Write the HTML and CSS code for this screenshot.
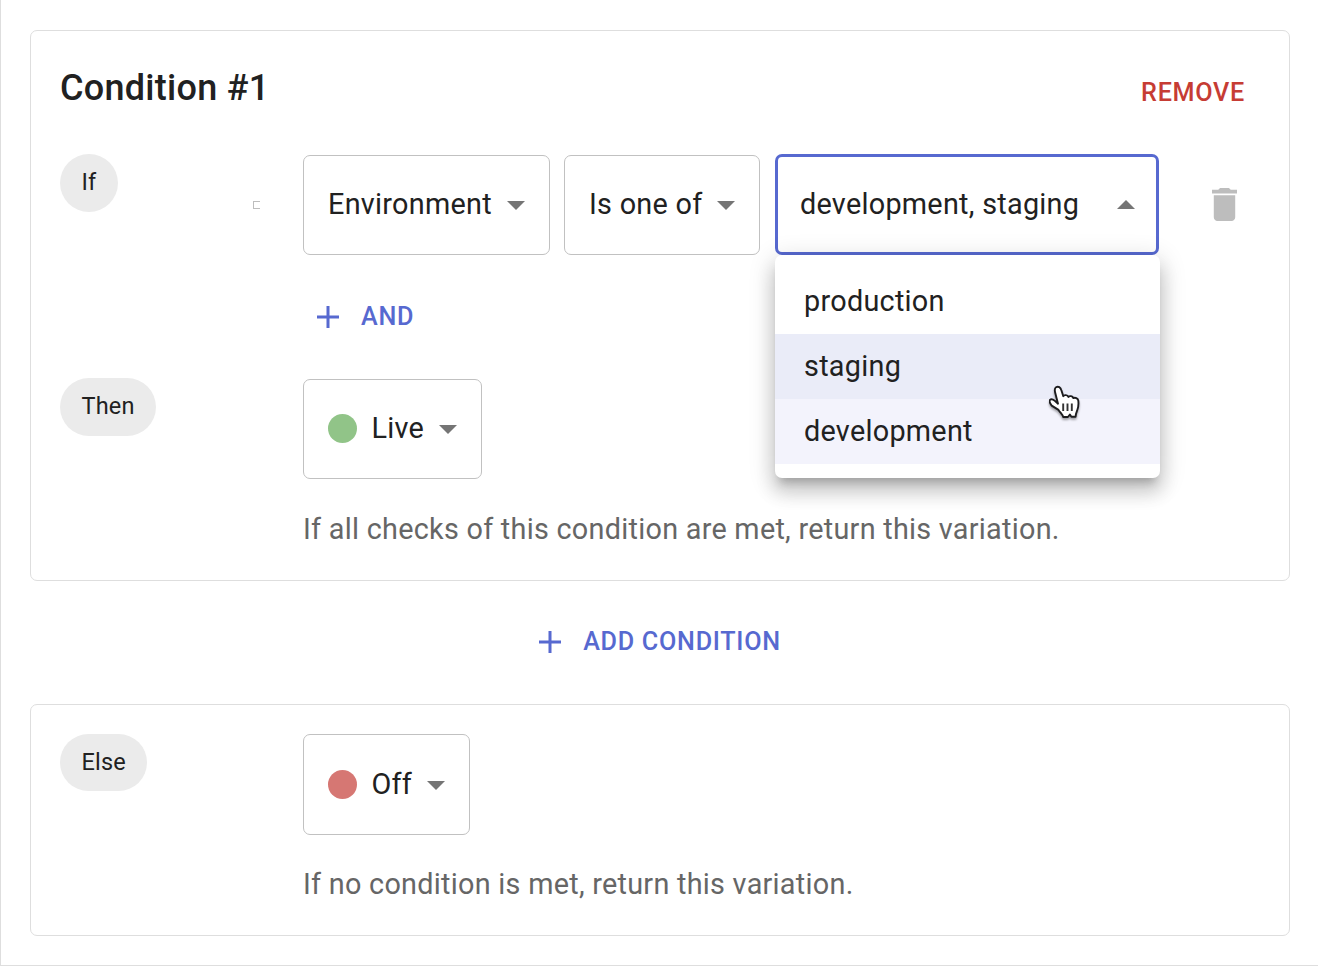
FILE: index.html
```html
<!DOCTYPE html>
<html lang="en">
<head>
<meta charset="utf-8">
<title>Conditions</title>
<link rel="stylesheet" href="styles.css">
</head>
<body>
<main class="panel">
  <section class="card">
    <header class="card-header">
      <h2 class="title">Condition #1</h2>
      <button class="btn btn-remove">REMOVE</button>
    </header>
    <div class="row row-if">
      <div class="label"><span class="chip">If</span><span class="bracket"></span></div>
      <div class="checks">
        <div class="select select-env"><span>Environment</span><svg class="arrow" viewBox="0 0 18 9"><path d="M0 0h18L9 9z"/></svg></div>
        <div class="select select-op"><span>Is one of</span><svg class="arrow" viewBox="0 0 18 9"><path d="M0 0h18L9 9z"/></svg></div>
        <div class="select select-open">
          <span>development, staging</span><svg class="arrow" viewBox="0 0 18 9"><path d="M0 9h18L9 0z"/></svg>
          <ul class="menu">
            <li class="item">production</li>
            <li class="item item-hover">staging</li>
            <li class="item item-selected">development</li>
          </ul>
          <svg class="pointer" viewBox="0 0 34 36">
            <path d="M7 3.2C9.4 1.8 11.6 3.4 12.3 6l2 6.2c.8-1.6 4.200-1.500 5.100.7 1.100-1.300 4.200-1 5 1.200 1.600-1 4.600-.1 4.900 2.600.4 3.500.1 6.500-1 9.300-.9 2.200-1.500 3.400-1.700 6.700h-4.200l-1.500-2.200-2 2.500h-4.700c-.6-2.700-2.900-4.300-4.700-7.100L2.700 21.600C.6 18.900-.1 17.200 1 15.900c1.500-1.400 4.300-.1 6.500 2.400L9 19.700 6.200 8.700C5.500 5.900 5.700 4 7 3.200z" fill="#fff" stroke="#1c1c1e" stroke-width="1.900" stroke-linejoin="round"/>
            <path d="M14.200 19.500v7.500M18.500 19.500v7.500M22.800 19.500v7.500" stroke="#333" stroke-width="1.900"/>
          </svg>
        </div>
        <svg class="trash" viewBox="5 3 14 18" preserveAspectRatio="none"><path d="M6 19c0 1.100.9 2 2 2h8c1.100 0 2-.9 2-2V7H6v12zM19 4h-3.500l-1-1h-5l-1 1H5v2h14V4z"/></svg>
      </div>
    </div>
    <button class="btn btn-and"><svg class="plus" viewBox="0 0 22 22"><path d="M11 0v22M0 11h22"/></svg>AND</button>
    <div class="row row-then">
      <div class="label"><span class="chip">Then</span></div>
      <div class="result">
        <div class="select select-live"><i class="dot dot-live"></i><span>Live</span><svg class="arrow" viewBox="0 0 18 9"><path d="M0 0h18L9 9z"/></svg></div>
        <p class="hint">If all checks of this condition are met, return this variation.</p>
      </div>
    </div>
  </section>
  <div class="add"><button class="btn"><svg class="plus" viewBox="0 0 22 22"><path d="M11 0v22M0 11h22"/></svg>ADD CONDITION</button></div>
  <section class="card card-else">
    <div class="row">
      <div class="label"><span class="chip">Else</span></div>
      <div class="result">
        <div class="select select-off"><i class="dot dot-off"></i><span>Off</span><svg class="arrow" viewBox="0 0 18 9"><path d="M0 0h18L9 9z"/></svg></div>
        <p class="hint">If no condition is met, return this variation.</p>
      </div>
    </div>
  </section>
</main>
</body>
</html>
```
FILE: styles.css
```css
* { box-sizing: border-box; }
body {
  margin: 0;
  background: #fff;
  color: #212121;
  font-family: Roboto, "Liberation Sans", sans-serif;
  font-size: 28.8px;
  letter-spacing: 0.27px;
}
.panel {
  height: 966px;
  padding: 30px 28px 0 29px;
  border-left: 1px solid #dedede;
  border-bottom: 1px solid #dedede;
}
.card {
  height: 551px;
  padding: 29px;
  border: 1px solid #dedede;
  border-radius: 7px;
}
.card-else { height: 232px; }
.card-header {
  display: flex;
  justify-content: space-between;
  height: 94px;
  padding-right: 15px;
}
.title {
  margin: 0;
  font-size: 36px;
  line-height: 57px;
  font-weight: 500;
  letter-spacing: 0.27px;
}
.btn {
  display: flex;
  align-items: center;
  padding: 0;
  border: 0;
  background: none;
  color: #5769d0;
  font: 500 25.2px/44px Roboto, "Liberation Sans", sans-serif;
  letter-spacing: 0.7px;
}
.btn-remove { height: 64px; padding-top: 1px; color: #c63c34; }
.btn-and { height: 44px; margin: 40px 0 0 257px; }
.plus {
  width: 22px;
  height: 22px;
  margin-right: 22px;
  fill: none;
  stroke: #5769d0;
  stroke-width: 3;
}
.row { display: flex; }
.row-if { height: 101px; }
.row-then { margin-top: 39px; }
.label {
  display: flex;
  width: 243px;
  flex: none;
  justify-content: space-between;
}
.chip {
  height: 58px;
  padding: 0 21.5px;
  border-radius: 29px;
  background: #ebebeb;
  font-size: 23.5px;
  line-height: 57px;
  letter-spacing: 0.2px;
}
.card-else .chip { height: 57px; }
.bracket {
  width: 7px;
  height: 8px;
  margin: 47px 43px 0 0;
  border: 1px solid #bdbdbd;
  border-right: 0;
}
.checks { display: flex; padding-top: 1px; }
.select {
  position: relative;
  display: flex;
  align-items: center;
  justify-content: space-between;
  height: 100px;
  padding: 0 24.5px 0 24px;
  border: 1px solid #c1c1c1;
  border-radius: 7px;
  line-height: 34px;
  white-space: nowrap;
}
.select > span { margin-top: -2px; }
.select-env { width: 247px; margin-right: 14px; }
.select-op { width: 196px; margin-right: 15px; }
.select-open {
  width: 384px;
  height: 101px;
  margin-top: -1px;
  padding: 0 21.5px 0 22px;
  border: 3px solid #5769d0;
}
.select-live { width: 179px; }
.select-off { width: 167px; height: 101px; }
.row-then .result { padding-top: 1px; }
.arrow { width: 18px; height: 9px; fill: #757575; }
.select-open .arrow { margin-top: -1px; }
.select-off .arrow { margin-top: 1px; }
.dot {
  width: 29px;
  height: 29px;
  margin-right: 14.5px;
  border-radius: 50%;
}
.select .dot + span { margin-right: auto; }
.dot-live { margin-bottom: 1px; background: #91c488; }
.dot-off { background: #d67773; }
.trash {
  width: 25px;
  height: 33px;
  margin: 32.5px 0 0 53px;
  fill: #bdbdbd;
}
.menu {
  position: absolute;
  z-index: 1;
  top: 98px;
  left: -3px;
  width: 385px;
  height: 223px;
  margin: 0;
  padding: 14px 0;
  list-style: none;
  border-radius: 7px;
  background: #fff;
  box-shadow: 0 9px 9px -5px rgba(0,0,0,.2), 0 14px 18px 2px rgba(0,0,0,.14), 0 5px 25px 4px rgba(0,0,0,.12);
}
.item { height: 65px; padding-left: 29px; line-height: 64px; }
.item-hover { background: #eaecf8; }
.item-selected { background: #f3f3fc; }
.pointer {
  position: absolute;
  z-index: 2;
  left: 271px;
  top: 227px;
  width: 34px;
  height: 36px;
  filter: drop-shadow(0 2px 1px rgba(0,0,0,.35));
}
.hint { margin: 33px 0 0; line-height: 34px; color: #666; }
.card-else .hint { margin-top: 32px; }
.add {
  display: flex;
  justify-content: center;
  height: 123px;
  padding-top: 39px;
}
.add .btn { height: 44px; }
```
